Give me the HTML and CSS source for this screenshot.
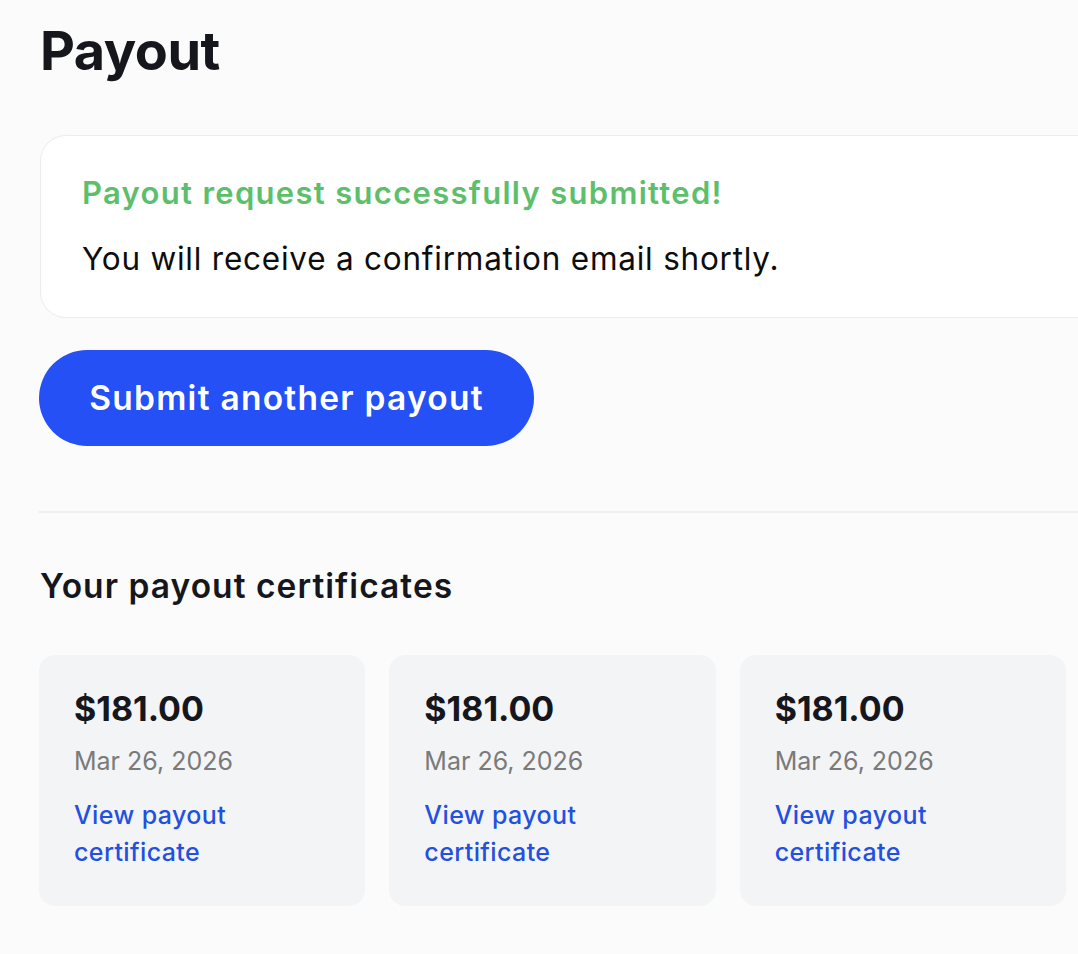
FILE: index.html
```html
<!DOCTYPE html>
<html lang="en">
<head>
<meta charset="utf-8">
<title>Payout</title>
<link rel="stylesheet" href="styles.css">
</head>
<body>
<main class="page">
  <h1 class="title">Payout</h1>
  <section class="notice">
    <p class="notice-title">Payout request successfully submitted!</p>
    <p class="notice-text">You will receive a confirmation email shortly.</p>
  </section>
  <button class="btn-primary" type="button">Submit another payout</button>
  <hr class="divider">
  <h2 class="section-title">Your payout certificates</h2>
  <div class="cert-grid">
    <div class="cert-card">
      <div class="cert-amount">$181.00</div>
      <div class="cert-date">Mar 26, 2026</div>
      <a class="cert-link" href="#">View payout certificate</a>
    </div>
    <div class="cert-card">
      <div class="cert-amount">$181.00</div>
      <div class="cert-date">Mar 26, 2026</div>
      <a class="cert-link" href="#">View payout certificate</a>
    </div>
    <div class="cert-card">
      <div class="cert-amount">$181.00</div>
      <div class="cert-date">Mar 26, 2026</div>
      <a class="cert-link" href="#">View payout certificate</a>
    </div>
  </div>
</main>
</body>
</html>
```

FILE: styles.css
```css
* { box-sizing: border-box; }
html, body {
  margin: 0;
  padding: 0;
  background: #fbfbfb;
  overflow: hidden;
}
body {
  font-family: "Inter", "Noto Sans", sans-serif;
  color: #16161d;
}
.page {
  width: 1140px;
  padding: 18px 0 0 40px;
}
.title {
  margin: 0;
  font-size: 54px;
  font-weight: 700;
  letter-spacing: -0.5px;
  line-height: 66px;
  color: #16161d;
}
.notice {
  margin-top: 51px;
  width: 1080px;
  height: 183px;
  background: #ffffff;
  border: 1.5px solid #ececec;
  border-radius: 26px;
  padding: 37px 42px 0 41px;
}
.notice p { margin: 0; }
.notice-title {
  font-size: 31px;
  font-weight: 600;
  letter-spacing: 1.3px;
  color: #5dbf6b;
  line-height: 40px;
}
.notice-text {
  margin-top: 26px !important;
  font-size: 31.5px;
  font-weight: 400;
  letter-spacing: 0.77px;
  color: #0d0d0d;
  line-height: 40px;
}
.btn-primary {
  display: block;
  margin-top: 32px;
  margin-left: -1px;
  width: 495px;
  height: 96px;
  border: none;
  border-radius: 48px;
  background: #2450f5;
  color: #ffffff;
  font-family: inherit;
  font-size: 33.5px;
  font-weight: 600;
  letter-spacing: 1.25px;
  padding: 0;
}
.divider {
  margin: 65px 0 0 -1px;
  border: none;
  height: 2px;
  background: #efefef;
}
.section-title {
  margin: 51px 0 0 0;
  font-size: 33.5px;
  font-weight: 600;
  letter-spacing: 1.05px;
  line-height: 44px;
  color: #16161d;
}
.cert-grid {
  margin-top: 47px;
  margin-left: -1px;
  width: 1027px;
  display: grid;
  grid-template-columns: repeat(3, 1fr);
  gap: 24px;
}
.cert-card {
  background: #f3f4f6;
  border-radius: 16px;
  height: 251px;
  padding: 30px 35px 0 35px;
  display: flex;
  flex-direction: column;
}
.cert-amount {
  font-size: 34px;
  font-weight: 700;
  line-height: 48px;
  color: #16161d;
}
.cert-date {
  margin-top: 10px;
  font-size: 25px;
  color: #7a7a7a;
  line-height: 36px;
}
.cert-link {
  margin-top: 18px;
  font-size: 25px;
  font-weight: 500;
  letter-spacing: 0.4px;
  color: #2450e0;
  text-decoration: none;
  line-height: 37px;
  max-width: 200px;
}
```
